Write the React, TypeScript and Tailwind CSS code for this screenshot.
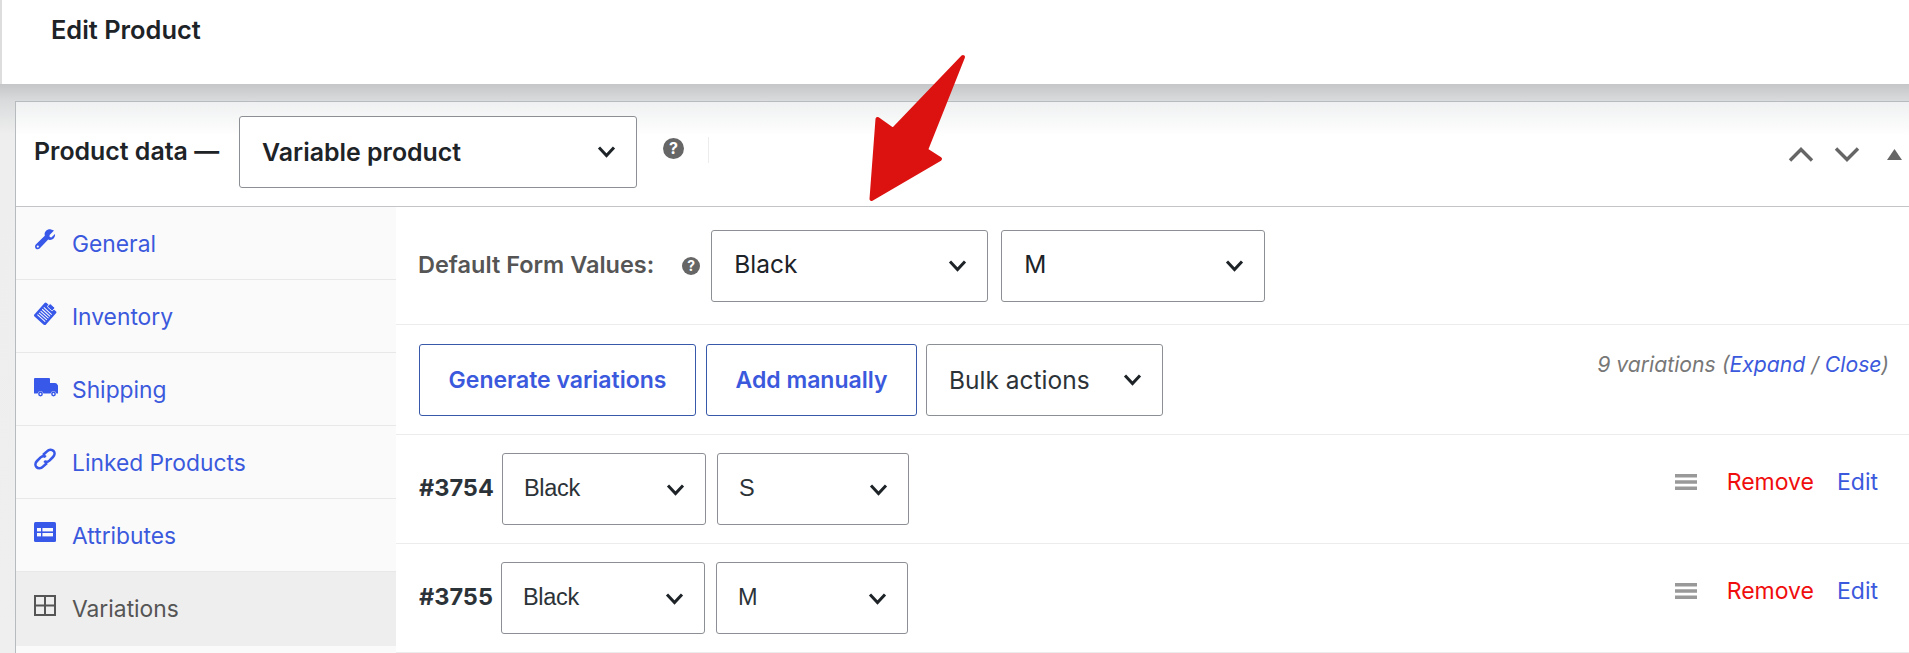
import React from "react";

const Chevron = () => (
  <svg width="19" height="13" viewBox="0 0 19 13" className="shrink-0" aria-hidden="true">
    <path d="M2 2.5 L9.5 10.5 L17 2.5" fill="none" stroke="#1d2327" strokeWidth="3" />
  </svg>
);

function Sel({ label, cls, text }: { label: string; cls: string; text: string }) {
  return (
    <div className={`flex items-center justify-between shrink-0 bg-white border border-[#8c8f94] rounded-[3px] ${cls}`}>
      <span className={text}>{label}</span>
      <Chevron />
    </div>
  );
}

function Help({ size }: { size: string }) {
  return (
    <span className={`flex items-center justify-center rounded-full bg-[#666] text-white font-bold shrink-0 ${size}`}>?</span>
  );
}

const blue = "#3858e9";

const Wrench = () => (
  <svg width="22" height="22" viewBox="0 0 22 22" aria-hidden="true">
    <path fill={blue} d="M20 1.5 L15.6 5.9 L15.6 8 L17.3 8.6 L21 5 C21.4 8.2 19 11.2 15.6 10.9 L14.2 10.6 L5.6 19.6 C4 21.2 1 20.2 1 17.4 C1 16.6 1.4 15.8 2 15.2 L10.8 6.8 L10.6 5 C10.6 2 14 -.6 17 .4 Z" />
    <circle cx="3.8" cy="17.6" r="1.1" fill="#fafafa" />
  </svg>
);
const Clip = () => (
  <svg width="23" height="23" viewBox="0 0 24 24" aria-hidden="true">
    <g transform="rotate(42 12 12)">
      <rect x="4" y="3" width="16" height="19" rx="1.5" fill={blue} />
      <path stroke="#fafafa" strokeWidth="1.1" d="M6.5 8.5 H17.5 M6.5 11 H17.5 M6.5 13.5 H17.5 M6.5 16 H17.5 M6.5 18.5 H17.5" />
      <rect x="8.5" y="1" width="7" height="4.5" rx="1" fill={blue} stroke="#fafafa" strokeWidth=".9" />
    </g>
  </svg>
);
const Truck = () => (
  <svg width="24" height="19" viewBox="0 0 24 19" aria-hidden="true">
    <path fill={blue} d="M0 1 Q0 0 1 0 H15 Q16 0 16 1 V5 H21 Q22 5 22.6 5.6 L24 7.5 V15.5 H22.4 A3 3 0 0 0 16.6 15.5 H9.4 A3 3 0 0 0 3.6 15.5 H0 Z" />
    <circle cx="6.5" cy="16" r="2.4" fill={blue} />
    <circle cx="19.5" cy="16" r="2.4" fill={blue} />
    <circle cx="6.5" cy="16" r=".9" fill="#fafafa" />
    <circle cx="19.5" cy="16" r=".9" fill="#fafafa" />
  </svg>
);
const LinkI = () => (
  <svg width="22" height="22" viewBox="0 0 22 22" aria-hidden="true">
    <g fill="none" stroke={blue} strokeWidth="2.6">
      <path d="M9 7 L13 3.4 C15 1.4 18 1.4 19.6 3 C21 4.6 20.8 7.2 19 9 L15.4 12.6 C13.6 14.2 11.6 14.2 10.2 13" />
      <path d="M13 15 L9 18.6 C7 20.6 4 20.6 2.4 19 C1 17.4 1.2 14.8 3 13 L6.6 9.4 C8.4 7.8 10.4 7.8 11.8 9" />
    </g>
  </svg>
);
const Attr = () => (
  <svg width="22" height="20" viewBox="0 0 22 20" aria-hidden="true">
    <rect width="22" height="20" rx="1.5" fill={blue} />
    <rect x="3" y="6" width="16" height="3.4" fill="#fafafa" />
    <rect x="3" y="11" width="16" height="3.4" fill="#fafafa" />
    <rect x="7" y="6" width="1.4" height="9" fill={blue} />
  </svg>
);
const Grid = () => (
  <svg width="22" height="21" viewBox="0 0 22 21" aria-hidden="true">
    <path fill="none" stroke="#555" strokeWidth="2" d="M1 1 H21 V20 H1 Z M11 1 V20 M1 10.5 H21" />
  </svg>
);

function Tab({ icon, label, active, h, top }: { icon: React.ReactNode; label: string; active?: boolean; h: string; top: string }) {
  return (
    <div className={`flex items-center pl-[18px] border-b ${h} ${active ? "bg-[#eeeeee] border-[#eeeeee] text-[#555]" : "border-[#e8e8e8] text-[#3b59dd]"}`}>
      <span className={`w-[38px] flex shrink-0 ${top}`}>{icon}</span>
      <span className="text-[22.8px] leading-none mt-[2px]">{label}</span>
    </div>
  );
}

function Row({ id, a, b, gap }: { id: string; a: string; b: string; gap: string }) {
  return (
    <div className="flex items-center h-[109px] pl-[23px] pr-[31px] border-b border-[#ececec]">
      <span className="w-[83px] text-[23.5px] font-bold text-[#2c3338] shrink-0 mb-[2px]">{id}</span>
      <Sel label={a} cls={`w-[204px] h-[72px] pl-[21px] pr-[20px] ${gap}`} text="text-[23.5px] tracking-[-0.3px] text-[#2c3338] font-['Liberation_Sans',sans-serif]" />
      <Sel label={b} cls="w-[192px] h-[72px] ml-[11px] pl-[21px] pr-[20px]" text="text-[23.5px] tracking-[-0.3px] text-[#2c3338] font-['Liberation_Sans',sans-serif]" />
      <div className="ml-auto flex items-center pb-[14px]">
        <svg width="22" height="16" viewBox="0 0 22 16" aria-hidden="true">
          <path fill="#999" d="M0 0 H22 V3.4 H0 Z M0 6.3 H22 V9.7 H0 Z M0 12.6 H22 V16 H0 Z" />
        </svg>
        <span className="ml-[30px] text-[23px] leading-none text-[#f00d0d]">Remove</span>
        <span className="ml-[23px] text-[23px] leading-none text-[#3b59dd]">Edit</span>
      </div>
    </div>
  );
}

export default function App() {
  return (
    <div className="relative w-[1909px] h-[653px] overflow-hidden bg-[#efefef] font-['Inter',sans-serif]">
      <header className="h-[84px] bg-white border-l-2 border-[#dddddd] pl-[49px] flex items-start pt-[16px]">
        <h1 className="text-[25.4px] leading-[28px] font-semibold text-[#1d2327]">Edit Product</h1>
      </header>
      <main className="h-[569px] pt-[17px] pl-[15px] bg-[linear-gradient(#c4c6c8_0,#d9dbdc_17px,#eeeeee_50px,#efefef_100%)]">
        <section className="h-[552px] bg-white border-t border-l border-[#b8bbbd]">
          <div className="h-[105px] flex items-center border-b border-[#c3c4c7] pl-[18px] pb-[5px] pr-[7px] bg-[linear-gradient(#eff0f1_0,#ffffff_34px)]">
            <span className="text-[24.9px] font-semibold text-[#1d2327] whitespace-nowrap">Product data —</span>
            <Sel label="Variable product" cls="w-[398px] h-[72px] ml-[20px] pl-[22px] pr-[20px]" text="text-[24.9px] font-semibold text-[#1d2327] mt-[2px]" />
            <span className="ml-[26px] mb-[7px]"><Help size="w-[21px] h-[21px] text-[16px]" /></span>
            <span className="ml-[24px] mb-[4px] w-px h-[26px] bg-[#ececec]" />
            <div className="ml-auto flex items-center mt-[6px]">
              <svg width="26" height="15" viewBox="0 0 26 15" aria-hidden="true"><path d="M2 13.5 L13 2.5 L24 13.5" fill="none" stroke="#666" strokeWidth="3.4" /></svg>
              <svg className="ml-[20px]" width="26" height="15" viewBox="0 0 26 15" aria-hidden="true"><path d="M2 1.5 L13 12.5 L24 1.5" fill="none" stroke="#666" strokeWidth="3.4" /></svg>
              <svg className="ml-[27px]" width="15" height="11" viewBox="0 0 15 11" aria-hidden="true"><path d="M7.5 0 L15 11 H0 Z" fill="#666" /></svg>
            </div>
          </div>
          <div className="flex h-[446px]">
            <nav className="w-[380px] shrink-0 bg-[#fafafa]">
              <Tab icon={<Wrench />} label="General" h="h-[73px]" top="-mt-[6px]" />
              <Tab icon={<Clip />} label="Inventory" h="h-[73px]" top="-mt-[6px]" />
              <Tab icon={<Truck />} label="Shipping" h="h-[73px]" top="-mt-[4px]" />
              <Tab icon={<LinkI />} label="Linked Products" h="h-[73px]" top="-mt-[6px]" />
              <Tab icon={<Attr />} label="Attributes" h="h-[73px]" top="-mt-[6px]" />
              <Tab icon={<Grid />} label="Variations" active h="h-[74px]" top="-mt-[6px]" />
            </nav>
            <div className="flex-1">
              <div className="flex items-center h-[118px] border-b border-[#ececec] pl-[22px]">
                <span className="text-[23.5px] font-semibold text-[#555] whitespace-nowrap mb-[2px]">Default Form Values:</span>
                <span className="ml-[28px]"><Help size="w-[18px] h-[18px] text-[14px]" /></span>
                <Sel label="Black" cls="w-[277px] h-[72px] ml-[11px] pl-[22px] pr-[20px]" text="text-[24.5px] text-[#1d2327] mb-[2px]" />
                <Sel label="M" cls="w-[264px] h-[72px] ml-[13px] pl-[22px] pr-[20px]" text="text-[24.5px] text-[#1d2327] mb-[2px]" />
              </div>
              <div className="flex items-center h-[110px] border-b border-[#ececec] pl-[23px] pr-[20px]">
                <div className="w-[277px] h-[72px] flex items-center justify-center pt-[2px] bg-white border border-[#3858a9] rounded-[3px] text-[23px] font-semibold text-[#3b59dd]">Generate variations</div>
                <div className="w-[211px] h-[72px] ml-[10px] flex items-center justify-center pt-[2px] bg-white border border-[#3858a9] rounded-[3px] text-[23px] font-semibold text-[#3b59dd]">Add manually</div>
                <Sel label="Bulk actions" cls="w-[237px] h-[72px] ml-[9px] pl-[22px] pr-[20px]" text="text-[24.5px] text-[#2c3338] mt-[2px]" />
                <div className="ml-auto mb-[30px] text-[21.2px] italic text-[#777] whitespace-nowrap">
                  9 variations (<span className="text-[#3b59dd]">Expand</span> / <span className="text-[#3b59dd]">Close</span>)
                </div>
              </div>
              <Row id="#3754" a="Black" b="S" gap="" />
              <Row id="#3755" a="Black" b="M" gap="-ml-px" />
            </div>
          </div>
        </section>
      </main>
      <svg className="absolute left-[865px] top-[50px]" width="105" height="155" viewBox="865 50 105 155" aria-hidden="true">
        <path fill="#dc1210" stroke="#dc1210" strokeWidth="4" strokeLinejoin="round" d="M963 57 L926 150 L940 159 L871.5 199 L877.5 119 L893 130 Z" />
      </svg>
    </div>
  );
}
